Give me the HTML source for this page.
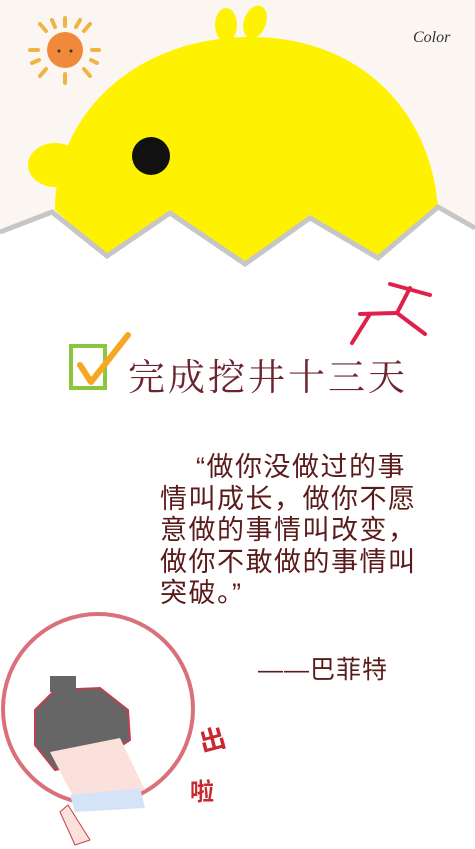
<!DOCTYPE html>
<html><head><meta charset="utf-8"><style>
body{margin:0;width:475px;height:849px;overflow:hidden;background:#fff;position:relative;font-family:"Liberation Sans","Noto Sans CJK SC",sans-serif}
.q{position:absolute;left:160px;top:452px;font-size:27px;line-height:31.5px;color:#5a1b1b;letter-spacing:1.5px;white-space:pre}
.a{position:absolute;left:258px;top:650px;font-size:25px;color:#5a1b1b;letter-spacing:1px}
.t{position:absolute;left:128px;top:347px;font-size:37px;color:#6e2430;letter-spacing:3px;font-family:"Noto Serif CJK SC",serif}
</style></head><body>
<svg width="475" height="849" style="position:absolute;left:0;top:0">
<polygon points="0,0 475,0 475,228 438,207 378,258 310,218 245,264 170,213 107,256 52,212 0,232" fill="#fbf6f2"/>
<ellipse cx="226" cy="25" rx="11" ry="17" fill="#fff200"/>
<ellipse cx="255" cy="22" rx="11" ry="17" transform="rotate(20 255 22)" fill="#fff200"/>
<path d="M55,210 C55,110 140,37 250,37 C360,37 430,110 438,207 L378,258 L310,218 L245,264 L170,213 L107,256 Z" fill="#fff200"/>
<ellipse cx="55" cy="165" rx="27" ry="22" fill="#fff200"/>
<polyline points="0,232 52,212 107,256 170,213 245,264 310,218 378,258 438,207 475,228" fill="none" stroke="#c6c6c6" stroke-width="5"/>
<circle cx="151" cy="156" r="19" fill="#111"/>
<g stroke="#f0b444" stroke-width="4" stroke-linecap="round">
<line x1="65" y1="26" x2="65" y2="18"/><line x1="65" y1="74" x2="65" y2="83"/>
<line x1="38" y1="50" x2="30" y2="50"/><line x1="92" y1="50" x2="99" y2="50"/>
<line x1="46" y1="31" x2="40" y2="24"/><line x1="84" y1="31" x2="90" y2="24"/>
<line x1="46" y1="69" x2="40" y2="76"/><line x1="84" y1="69" x2="90" y2="76"/>
<line x1="55" y1="27" x2="52" y2="20"/><line x1="76" y1="27" x2="80" y2="20"/>
<line x1="39" y1="60" x2="32" y2="63"/><line x1="91" y1="60" x2="97" y2="63"/>
</g>
<circle cx="65" cy="50" r="18" fill="#f08a3a"/>
<circle cx="59" cy="51" r="1.5" fill="#333"/><circle cx="71" cy="51" r="1.5" fill="#333"/>
<text x="413" y="42" font-family="Liberation Serif,serif" font-style="italic" font-size="16" fill="#333">Color</text>
<rect x="71" y="346" width="34" height="42" fill="none" stroke="#8cc63f" stroke-width="4"/>
<path d="M80,365 L91,382 L128,335" fill="none" stroke="#f5a623" stroke-width="6" stroke-linecap="round" stroke-linejoin="round"/>
<g stroke="#e0204a" stroke-width="4" stroke-linecap="round">
<line x1="390" y1="284" x2="430" y2="295"/><line x1="410" y1="288" x2="397" y2="313"/>
<line x1="360" y1="314" x2="397" y2="313"/><line x1="397" y1="313" x2="425" y2="334"/>
<line x1="370" y1="314" x2="352" y2="343"/>
</g>
<circle cx="98" cy="709" r="95" fill="none" stroke="#d9707a" stroke-width="4"/>
<path d="M35,710 L55,690 L100,688 L128,710 L130,740 L100,760 L55,770 L35,745 Z" fill="#666" stroke="#c04050" stroke-width="2"/>
<rect x="50" y="676" width="26" height="16" fill="#666"/>
<path d="M50,752 L120,738 L145,790 L75,800 Z" fill="#fbe0dc"/>
<path d="M70,795 L140,788 L145,808 L75,812 Z" fill="#d4e4f6"/>
<path d="M68,805 L90,840 L75,845 L60,812 Z" fill="#fbe0dc" stroke="#c04050"/>
<text x="205" y="748" font-size="26" fill="#c8282e" font-weight="bold" transform="rotate(-15 220 760)">出</text>
<text x="190" y="800" font-size="24" fill="#c8282e" font-weight="bold">啦</text>
</svg>
<div class="t">完成挖井十三天</div>
<div class="q">    “做你没做过的事
情叫成长，做你不愿
意做的事情叫改变，
做你不敢做的事情叫
突破。”</div>
<div class="a">——巴菲特</div>
</body></html>
